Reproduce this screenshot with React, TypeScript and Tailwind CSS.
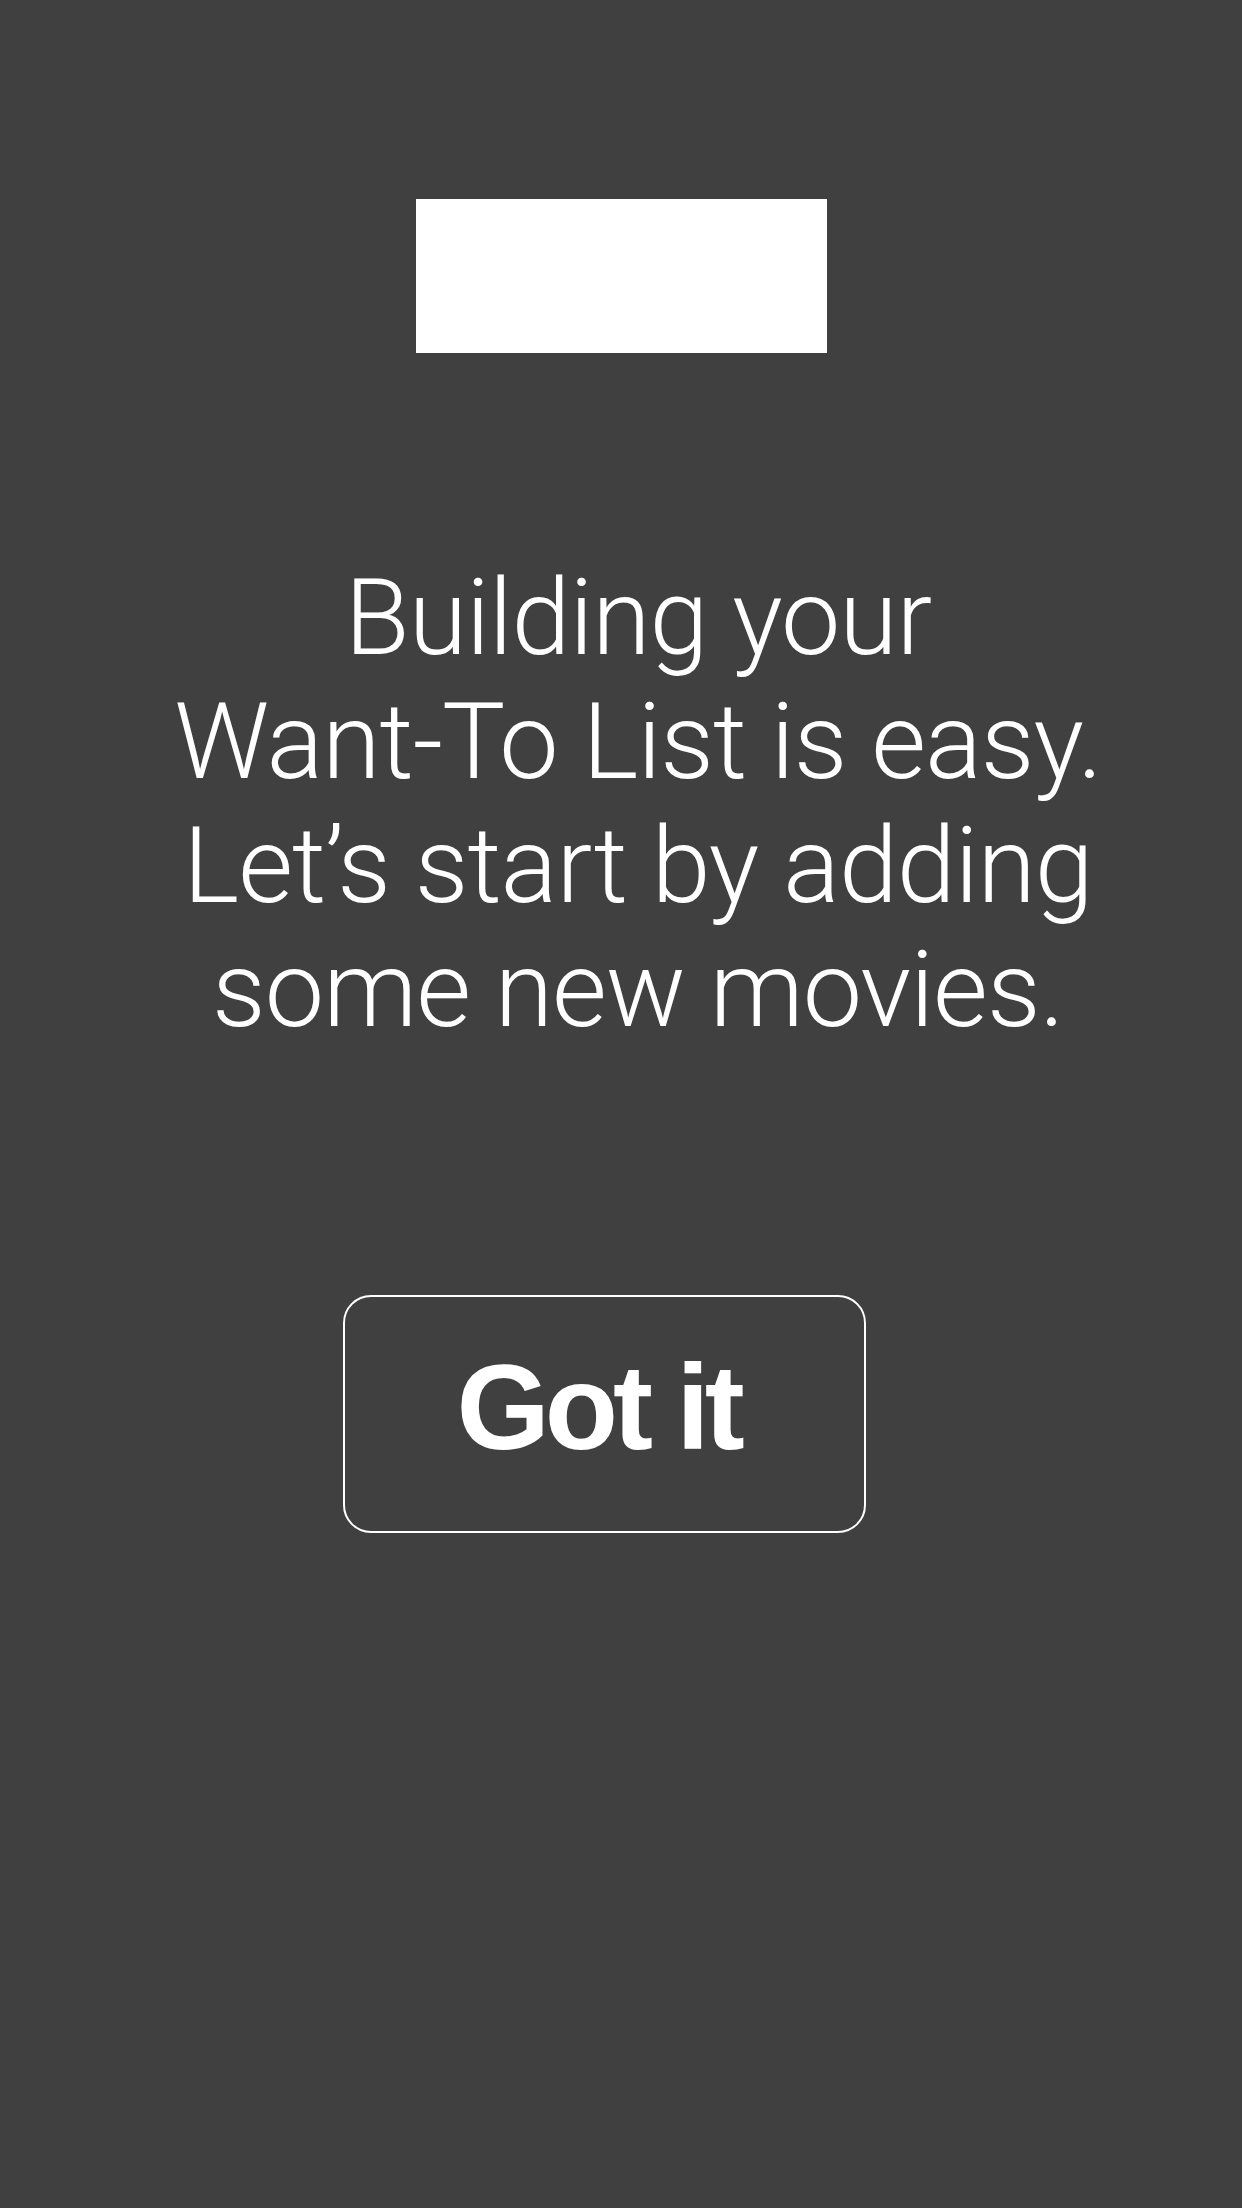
export default function App() {
  return (
    <div className="min-h-[2208px] w-full bg-[#404040] flex flex-col items-center">
      {/* placeholder logo block */}
      <div className="mt-[199px] h-[154px] w-[411px] bg-white" />

      <p
        className="mt-[203px] pl-[34px] text-center text-white text-[106px] leading-[124px] font-light tracking-[-1px]"
        style={{ fontFamily: 'Roboto, "Liberation Sans", sans-serif' }}
      >
        Building your
        <br />
        Want-To List is easy.
        <br />
        Let’s start by adding
        <br />
        some new movies.
      </p>

      <button
        className="mt-[243px] mr-[34px] h-[238px] w-[523px] rounded-[28px] border-2 border-white flex items-center justify-center pb-[14px] pr-[12px] text-white text-[120px] font-bold tracking-[-5px]"
        style={{ fontFamily: '"Liberation Sans", Arial, sans-serif' }}
      >
        Got it
      </button>
    </div>
  )
}
